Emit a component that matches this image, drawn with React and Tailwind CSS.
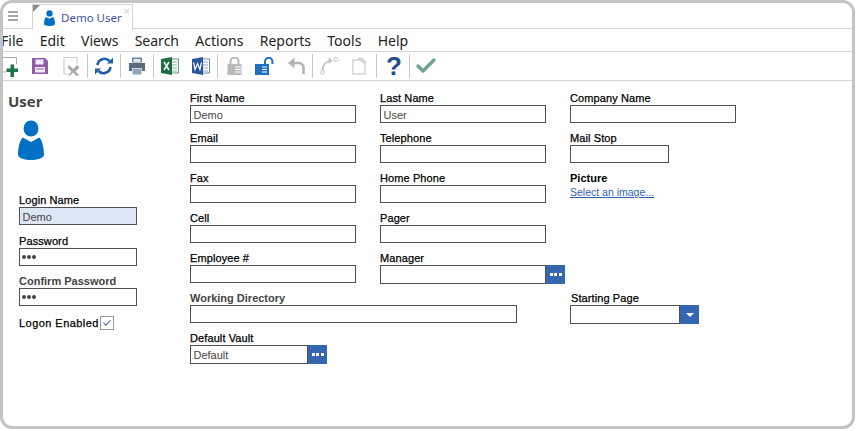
import React from 'react'
import { Check } from 'lucide-react'

const MENU = ['File', 'Edit', 'Views', 'Search', 'Actions', 'Reports', 'Tools', 'Help']

function UserIcon({ className }) {
  return (
    <svg viewBox="0 0 28 40" preserveAspectRatio="none" className={className}>
      <circle cx="14" cy="8.5" r="8" fill="#0070c5" />
      <path d="M5 17.5 L14 22 L23 17.5 C26 20 28 28 28 35 C28 38 20 40 14 40 C8 40 0 38 0 35 C0 28 2 20 5 17.5Z" fill="#0070c5" />
    </svg>
  )
}

function Sep() {
  return <div className="w-px h-[24px] bg-[#c8c8c8]" />
}

function NewIcon() {
  return (
    <svg viewBox="0 0 18 24" className="w-[18px] h-[24px]">
      <path d="M0.5 3.5H14.5V10M0.5 3.5V18H4" fill="none" stroke="#a8a8a8" strokeWidth="1" />
      <path d="M8.5 10.5h3.5v4h4v3.5h-4v5H8.5v-5h-4v-3.5h4z" fill="#217346" />
    </svg>
  )
}

function SaveIcon() {
  return (
    <svg viewBox="0 0 18 18" className="w-[18px] h-[18px]">
      <path d="M1 1h13l3 3v13H1z" fill="#8e5ba6" />
      <rect x="4.5" y="2.5" width="8" height="5" fill="#f3ecf6" />
      <rect x="4" y="10" width="10" height="5.5" fill="#f3ecf6" />
      <rect x="5" y="11.5" width="8" height="1" fill="#8e5ba6" />
    </svg>
  )
}

function CancelIcon() {
  return (
    <svg viewBox="0 0 18 20" className="w-[18px] h-[20px]">
      <path d="M1 14V1.5H14V8M1 14V18H8" fill="none" stroke="#cfcfcf" strokeWidth="1.2" />
      <path d="M6 9l4 4 4-4 2.5 2.5-4 4 4 4H13l-3-3-3 3H5l3.5-4-4-4z" fill="#a9a9a9" />
    </svg>
  )
}

function RefreshIcon() {
  return (
    <svg viewBox="0 0 20 20" className="w-[20px] h-[20px]" fill="none">
      <path d="M3.5 9A7 7 0 0 1 15.5 5" stroke="#1f5fa8" strokeWidth="2.6" />
      <path d="M16.5 11A7 7 0 0 1 4.5 15" stroke="#1f5fa8" strokeWidth="2.6" />
      <path d="M13 7.5h6V1.5z" fill="#1f5fa8" />
      <path d="M7 12.5H1v6z" fill="#1f5fa8" />
    </svg>
  )
}

function PrintIcon() {
  return (
    <svg viewBox="0 0 18 18" className="w-[18px] h-[18px]">
      <rect x="4" y="0.5" width="10" height="5" fill="#6d8499" />
      <rect x="5.5" y="2" width="7" height="3" fill="#dfe6ec" />
      <path d="M1 6h16v8h-3v-3H4v3H1z" fill="#5c6c78" />
      <rect x="4.5" y="11.5" width="9" height="6" fill="#8fa6b8" />
    </svg>
  )
}

function OfficeIcon({ color, letter }) {
  return (
    <svg viewBox="0 0 18 18" className="w-[18px] h-[18px]">
      <rect x="7" y="2" width="10.5" height="14" fill="#fff" stroke={color} strokeWidth="0.7" />
      <path d="M10 5h6M10 8h6M10 11h6M10 14h6" stroke={color} strokeOpacity="0.55" strokeWidth="1.2" />
      <path d="M0 2l11-2v18L0 16z" fill={color} />
      {letter === 'X'
        ? <path d="M3 5l5 8M8 5l-5 8" stroke="#fff" strokeWidth="1.5" />
        : <path d="M1.5 5.5l1.6 7 2.4-6 2.4 6 1.6-7" fill="none" stroke="#fff" strokeWidth="1.2" />}
    </svg>
  )
}

function LockIcon({ open }) {
  if (open) {
    return (
      <svg viewBox="0 0 20 18" className="w-[20px] h-[18px]">
        <path d="M10 7V4.5a3.7 3.7 0 0 1 7.4 0V7" fill="none" stroke="#1f6fc0" strokeWidth="2" />
        <rect x="0" y="7" width="14" height="11" fill="#1f6fc0" />
        <path d="M7 10h5M7 12.5h5M7 15h5" stroke="#fff" strokeWidth="1" />
      </svg>
    )
  }
  return (
    <svg viewBox="0 0 15 18" className="w-[15px] h-[18px]">
      <path d="M3.5 7V4.5a4 4 0 0 1 8 0V7" fill="none" stroke="#b9b9b9" strokeWidth="2" />
      <rect x="0.5" y="7" width="14" height="11" fill="#b9b9b9" />
      <path d="M8 10h6M8 12.5h6M8 15h6" stroke="#fff" strokeWidth="1" />
    </svg>
  )
}

function UndoIcon() {
  return (
    <svg viewBox="0 0 17 18" className="w-[17px] h-[18px]" fill="none">
      <path d="M4 6h7a4.5 4.5 0 0 1 4.5 4.5V17" stroke="#b5b5b5" strokeWidth="2.6" />
      <path d="M6.5 0.5v11L0 6z" fill="#b5b5b5" />
    </svg>
  )
}

function BranchIcon() {
  return (
    <svg viewBox="0 0 19 18" className="w-[19px] h-[18px]" fill="none">
      <path d="M2.5 14C2.5 9 5 5 10 3.5" stroke="#c2c2c2" strokeWidth="1.8" />
      <path d="M9 0.5l4 3.5-5 2.5z" fill="#c2c2c2" />
      <circle cx="2.5" cy="15.5" r="1.8" stroke="#c2c2c2" strokeWidth="1" />
      <circle cx="16" cy="2.5" r="2" stroke="#c2c2c2" strokeWidth="1" />
    </svg>
  )
}

function PageIcon() {
  return (
    <svg viewBox="0 0 16 18" className="w-[16px] h-[18px]" fill="none">
      <path d="M0.8 3H9l4 4v10H0.8z" stroke="#d4d4d4" strokeWidth="1.4" />
      <path d="M6 0.5h4l5 5-3 1-6-4z" fill="#d4d4d4" />
    </svg>
  )
}

function Label({ children, className = '' }) {
  return <div className={`h-[13px] leading-[13px] text-[11px] tracking-[0.1px] [-webkit-text-stroke:0.25px_#000] text-black whitespace-nowrap ${className}`}>{children}</div>
}

// these labels are heavier and greyer than the rest in the screenshot
function BoldLabel({ children }) {
  return <div className="h-[13px] leading-[13px] text-[11px] font-bold text-[#444] whitespace-nowrap">{children}</div>
}

function Input({ value = '', width = 'w-[166px]', className = '' }) {
  return (
    <div className={`h-[18px] border border-[#505050] px-[2.5px] text-[11px] leading-[18px] text-[#444] bg-white ${width} ${className}`}>
      {value}
    </div>
  )
}

function DotsButton() {
  return (
    <div className="w-[19px] h-[19px] bg-[#3566b0] flex items-center justify-center gap-[1.5px]">
      <span className="w-[3px] h-[3px] bg-white" />
      <span className="w-[3px] h-[3px] bg-white" />
      <span className="w-[3px] h-[3px] bg-white" />
    </div>
  )
}

function Field({ label, children, className = '' }) {
  return (
    <div className={`h-[40px] ${className}`}>
      {typeof label === 'string' ? <Label>{label}</Label> : label}
      {children}
    </div>
  )
}

function Pw() {
  return (
    <div className="h-[18px] w-[118px] border border-[#505050] px-[1.5px] flex items-center gap-px">
      <span className="w-[4px] h-[4px] rounded-full bg-[#444]" />
      <span className="w-[4px] h-[4px] rounded-full bg-[#444]" />
      <span className="w-[4px] h-[4px] rounded-full bg-[#444]" />
    </div>
  )
}

export default function App() {
  return (
    <div className="w-[856px] h-[431px] bg-white font-['Liberation_Sans',Arial,sans-serif]">
      <div className="w-[855px] h-[429px] border-[3px] border-[#c4c4c4] rounded-[12px] overflow-hidden flex flex-col">
        {/* tab strip */}
        <div className="h-[26px] shrink-0 flex border-b border-[#d4d4d4]">
          <div className="w-[29px] pl-[5px] flex flex-col justify-center gap-[2px] pt-[1px]">
            <span className="w-[10px] h-[2px] bg-[#a8a8a8]" />
            <span className="w-[10px] h-[2px] bg-[#a8a8a8]" />
            <span className="w-[10px] h-[2px] bg-[#a8a8a8]" />
          </div>
          <div className="relative w-[101px] h-[26px] mt-px border-x border-t border-[#d4d4d4] bg-white flex items-center pl-[11px] gap-[6px]">
            <span className="absolute top-0 left-0 w-0 h-0 border-t-[7px] border-r-[7px] border-t-[#8a8a8a] border-r-transparent" />
            <UserIcon className="w-[11px] h-[16px]" />
            <span className="text-[11.5px] text-[#3f55a5] font-['Noto_Sans',sans-serif]">Demo User</span>
            <span className="absolute top-[2px] right-[2px] text-[11px] leading-[8px] font-bold text-[#d5dcea]">×</span>
          </div>
        </div>

        {/* menu */}
        <div className="h-[23px] shrink-0 flex items-center border-b border-[#d4d4d4] -ml-[2px] gap-[16.3px] text-[14px] text-[#222] font-['Noto_Sans',sans-serif]">
          {MENU.map((m) => <span key={m}>{m}</span>)}
        </div>

        {/* toolbar */}
        <div className="h-[29px] shrink-0 flex items-center border-b border-[#d4d4d4]">
          <div className="ml-[-1px]"><NewIcon /></div>
          <div className="ml-[11px]"><SaveIcon /></div>
          <div className="ml-[14px]"><CancelIcon /></div>
          <div className="ml-[6px]"><Sep /></div>
          <div className="ml-[6px]"><RefreshIcon /></div>
          <div className="ml-[6px]"><Sep /></div>
          <div className="ml-[7px]"><PrintIcon /></div>
          <div className="ml-[7px]"><Sep /></div>
          <div className="ml-[7px]"><OfficeIcon color="#1e6e42" letter="X" /></div>
          <div className="ml-[13px]"><OfficeIcon color="#2b579a" letter="W" /></div>
          <div className="ml-[7px]"><Sep /></div>
          <div className="ml-[9px]"><LockIcon /></div>
          <div className="ml-[13px]"><LockIcon open /></div>
          <div className="ml-[13px]"><UndoIcon /></div>
          <div className="ml-[7px]"><Sep /></div>
          <div className="ml-[7px]"><BranchIcon /></div>
          <div className="ml-[13px]"><PageIcon /></div>
          <div className="ml-[8px]"><Sep /></div>
          <span className="ml-[9px] w-[15px] text-center text-[26px] leading-[26px] font-bold text-[#1f4e8c]">?</span>
          <div className="ml-[8px]"><Sep /></div>
          <Check className="ml-[4px] text-[#6fa38f]" size={24} strokeWidth={3.4} />
        </div>

        {/* form */}
        <div className="flex-1 flex min-h-0">
          <div className="w-[187px] shrink-0 flex flex-col">
            <div className="ml-[5px] mt-[11px] h-[18px] leading-[18px] text-[15px] font-bold text-[#444] font-['Open_Sans',sans-serif]">User</div>
            <UserIcon className="ml-[15px] mt-[10px] w-[26px] h-[40px]" />
            <div className="ml-[16px] mt-[34px]">
              <div className="h-[41px]">
                <Label>Login Name</Label>
                <Input value="Demo" width="w-[118px]" className="!bg-[#dde6f5]" />
              </div>
              <div className="h-[40px]">
                <Label>Password</Label>
                <Pw />
              </div>
              <div className="h-[40px]">
                <BoldLabel>Confirm Password</BoldLabel>
                <Pw />
              </div>
              <div className="flex items-center gap-[1px] mt-px">
                <Label className="!tracking-[0.45px]">Logon Enabled</Label>
                <div className="w-[14px] h-[14px] border border-[#9a9a9a] flex items-center justify-center">
                  <Check className="text-[#3566b0]" size={10} strokeWidth={2.5} />
                </div>
              </div>
            </div>
          </div>

          <div className="flex-1 pt-[11px] grid grid-cols-[190px_190px_1fr] auto-rows-[40px]">
            <Field label="First Name"><Input value="Demo" /></Field>
            <Field label="Last Name"><Input value="User" /></Field>
            <Field label="Company Name"><Input /></Field>

            <Field label="Email"><Input /></Field>
            <Field label="Telephone"><Input /></Field>
            <Field label="Mail Stop"><Input width="w-[99px]" /></Field>

            <Field label="Fax"><Input /></Field>
            <Field label="Home Phone"><Input /></Field>
            <Field label={<BoldLabel><span className="text-black">Picture</span></BoldLabel>}>
              <div className="text-[10.5px] leading-[15px] text-[#2f63b0] underline">Select an image...</div>
            </Field>

            <Field label="Cell"><Input /></Field>
            <Field label="Pager" className="col-span-2"><Input /></Field>

            <Field label="Employee #"><Input /></Field>
            <Field label="Manager" className="col-span-2">
              <div className="flex">
                <Input width="w-[166px]" className="!h-[19px]" />
                <DotsButton />
              </div>
            </Field>

            <Field label={<BoldLabel>Working Directory</BoldLabel>} className="col-span-2"><Input width="w-[327px]" /></Field>
            <Field label={<Label className="ml-px">Starting Page</Label>}>
              <div className="flex">
                <Input width="w-[110px]" className="!h-[19px]" />
                <div className="w-[19px] h-[19px] bg-[#3566b0] flex items-center justify-center">
                  <span className="w-0 h-0 border-x-[4px] border-t-[4px] border-x-transparent border-t-white" />
                </div>
              </div>
            </Field>

            <Field label="Default Vault" className="col-span-3">
              <div className="flex">
                <Input value="Default" width="w-[118px]" className="!h-[19px]" />
                <DotsButton />
              </div>
            </Field>
          </div>
        </div>
      </div>
    </div>
  )
}
